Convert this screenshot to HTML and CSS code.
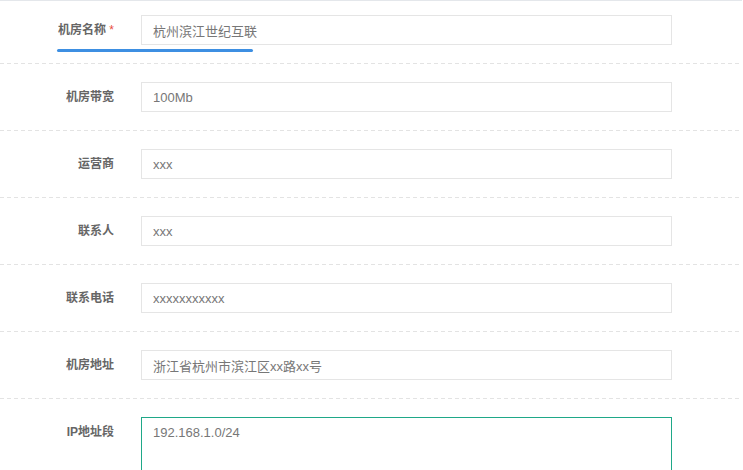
FILE: index.html
```html
<!DOCTYPE html>
<html lang="zh-CN">
<head>
    <meta charset="UTF-8">
    <meta name="viewport" content="width=device-width, initial-scale=1.0">
    <title>机房信息</title>
    <link rel="stylesheet" href="styles.css">
</head>
<body>
    <form class="room-form">
        <div class="form-row first">
            <label class="form-label" for="room-name">机房名称 <span class="required">*</span></label>
            <input type="text" id="room-name" class="form-input" value="杭州滨江世纪互联">
            <span class="focus-line"></span>
        </div>
        <div class="form-row">
            <label class="form-label" for="bandwidth">机房带宽</label>
            <input type="text" id="bandwidth" class="form-input" value="100Mb">
        </div>
        <div class="form-row">
            <label class="form-label" for="carrier">运营商</label>
            <input type="text" id="carrier" class="form-input" value="xxx">
        </div>
        <div class="form-row">
            <label class="form-label" for="contact">联系人</label>
            <input type="text" id="contact" class="form-input" value="xxx">
        </div>
        <div class="form-row">
            <label class="form-label" for="phone">联系电话</label>
            <input type="text" id="phone" class="form-input" value="xxxxxxxxxxx">
        </div>
        <div class="form-row">
            <label class="form-label" for="address">机房地址</label>
            <input type="text" id="address" class="form-input" value="浙江省杭州市滨江区xx路xx号">
        </div>
        <div class="form-row last">
            <label class="form-label" for="ip-range">IP地址段</label>
            <textarea id="ip-range" class="form-input form-textarea">192.168.1.0/24</textarea>
        </div>
    </form>
</body>
</html>
```
FILE: styles.css
```css
html, body {
    margin: 0;
    padding: 0;
    background-color: #fff;
    overflow: hidden;
}
body {
    font-family: "Liberation Sans", "Noto Sans CJK SC", sans-serif;
    color: #666;
}
.room-form {
    width: 742px;
    border-top: 1px solid #e4e7eb;
}
.form-row {
    position: relative;
    display: flex;
    align-items: flex-start;
    padding: 18px 0 19px;
    background-image: repeating-linear-gradient(to right, #e3e3e3 0, #e3e3e3 4px, transparent 4px, transparent 7px);
    background-size: 100% 1px;
    background-position: left bottom;
    background-repeat: no-repeat;
}
.form-row.first {
    padding-top: 14px;
}
.form-row.last {
    background-image: none;
}
.form-label {
    width: 114px;
    flex-shrink: 0;
    text-align: right;
    font-size: 12px;
    font-weight: bold;
    line-height: 30px;
    color: #666;
}
.required {
    color: #e84c3d;
    font-weight: normal;
}
.form-input {
    box-sizing: border-box;
    margin: 0 0 0 27px;
    width: 531px;
    height: 30px;
    padding: 0 11px;
    border: 1px solid #e5e5e5;
    border-radius: 0;
    font-family: "Liberation Sans", "Noto Sans CJK SC", sans-serif;
    font-size: 13px;
    color: #777;
    outline: none;
}
textarea.form-textarea {
    height: 90px;
    padding: 7px 11px;
    border: 1px solid #1fa888;
    resize: none;
    line-height: 15px;
}
.focus-line {
    position: absolute;
    left: 57px;
    top: 48px;
    width: 196px;
    height: 3px;
    border-radius: 2px;
    background-color: #3d8fe2;
}
```
